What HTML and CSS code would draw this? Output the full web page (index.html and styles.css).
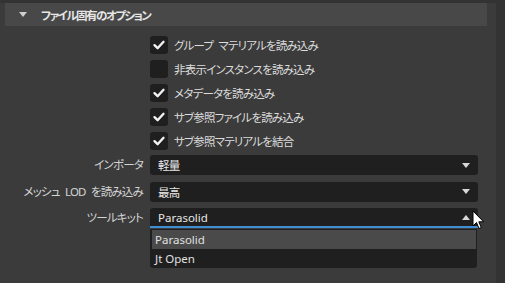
FILE: index.html
```html
<!DOCTYPE html>
<html lang="ja">
<head>
<meta charset="utf-8">
<link rel="stylesheet" href="styles.css">
</head>
<body>
<div class="page">
  <div class="main">
    <div class="header">
      <span class="tri"></span>
      <span class="title">ファイル固有のオプション</span>
    </div>
    <div class="checks">
      <div class="check"><span class="box on"><svg viewBox="0 0 18 18" width="18" height="18"><path d="M4.5 9.2 L7.6 12.2 L13.5 5.8" fill="none" stroke="#f2f2f2" stroke-width="2.4" stroke-linecap="round" stroke-linejoin="round"/></svg></span><span class="lbl">グループ マテリアルを読み込み</span></div>
      <div class="check"><span class="box"></span><span class="lbl">非表示インスタンスを読み込み</span></div>
      <div class="check"><span class="box on"><svg viewBox="0 0 18 18" width="18" height="18"><path d="M4.5 9.2 L7.6 12.2 L13.5 5.8" fill="none" stroke="#f2f2f2" stroke-width="2.4" stroke-linecap="round" stroke-linejoin="round"/></svg></span><span class="lbl">メタデータを読み込み</span></div>
      <div class="check"><span class="box on"><svg viewBox="0 0 18 18" width="18" height="18"><path d="M4.5 9.2 L7.6 12.2 L13.5 5.8" fill="none" stroke="#f2f2f2" stroke-width="2.4" stroke-linecap="round" stroke-linejoin="round"/></svg></span><span class="lbl">サブ参照ファイルを読み込み</span></div>
      <div class="check"><span class="box on"><svg viewBox="0 0 18 18" width="18" height="18"><path d="M4.5 9.2 L7.6 12.2 L13.5 5.8" fill="none" stroke="#f2f2f2" stroke-width="2.4" stroke-linecap="round" stroke-linejoin="round"/></svg></span><span class="lbl">サブ参照マテリアルを結合</span></div>
    </div>
    <div class="fields">
      <div class="flabel">インポータ</div>
      <div class="select"><span class="val">軽量</span><span class="arrow down"></span></div>
      <div class="flabel">メッシュ LOD を読み込み</div>
      <div class="select"><span class="val">最高</span><span class="arrow down"></span></div>
      <div class="flabel">ツールキット</div>
      <div class="select open"><span class="val latin">Parasolid</span><span class="arrow up"></span>
        <div class="popup">
          <div class="item hl">Parasolid</div>
          <div class="item">Jt Open</div>
        </div>
        <svg class="cursor" width="13" height="20" viewBox="0 0 13 20"><path d="M1 1 L1 16 L4.5 12.5 L7 18.5 L9.3 17.5 L6.8 11.8 L11.6 11.8 Z" fill="#ffffff" stroke="#000000" stroke-width="1" stroke-linejoin="miter"/></svg>
      </div>
    </div>
  </div>
  <div class="rail"></div>
</div>
</body>
</html>
```

FILE: styles.css
```css
* { box-sizing: border-box; }
html, body {
  margin: 0;
  padding: 0;
  width: 505px;
  height: 283px;
  overflow: hidden;
  background: #3b3b3b;
  font-family: "Noto Sans", "Noto Sans CJK JP", sans-serif;
  font-size: 11.5px;
  color: #dcdcdc;
}
.page {
  display: flex;
  height: 283px;
}
.main {
  width: 496px;
  padding-top: 3px;
  background: linear-gradient(#333333 0 3px, #3b3b3b 3px);
}
.rail {
  width: 9px;
  background: #333333;
}
.header {
  margin-left: 5px;
  width: 482px;
  height: 23px;
  background: #484848;
  display: flex;
  align-items: center;
  padding-left: 14px;
}
.tri {
  width: 0;
  height: 0;
  border-left: 4px solid transparent;
  border-right: 4px solid transparent;
  border-top: 5px solid #cfcfcf;
  margin-right: 14px;
}
.title {
  color: #e6e6e6;
  font-weight: 600;
  font-feature-settings: "palt";
  letter-spacing: -1.5px;
}
.checks {
  display: flex;
  flex-direction: column;
  gap: 6px;
  padding-left: 150px;
  margin-top: 10px;
}
.check {
  display: flex;
  align-items: center;
  height: 18px;
}
.box {
  width: 18px;
  height: 18px;
  background: #1f1f1f;
  border-radius: 3px;
  margin-right: 6px;
  display: block;
}
.box svg { display: block; }
.lbl, .flabel, .val {
  font-feature-settings: "palt";
  letter-spacing: -0.8px;
  word-spacing: 3px;
}
.lbl { color: #dcdcdc; }
.fields {
  display: grid;
  grid-template-columns: 150px 328px;
  grid-auto-rows: 20px;
  row-gap: 6.5px;
  margin-top: 5px;
}
.flabel {
  text-align: right;
  padding-right: 7px;
  line-height: 20px;
  color: #d4d4d4;
}
.select {
  position: relative;
  background: #1f1f1f;
  border-radius: 3px;
  display: flex;
  align-items: center;
  padding-left: 8px;
  padding-right: 8px;
}
.select.open {
  border-radius: 3px 3px 0 0;
  border-bottom: 2px solid #3d8fd1;
}
.val {
  flex: 1;
  color: #e8e8e8;
}
.val.latin { letter-spacing: 0; }
.arrow {
  width: 0;
  height: 0;
  border-left: 4px solid transparent;
  border-right: 4px solid transparent;
}
.arrow.down { border-top: 5px solid #d8d8d8; }
.arrow.up { border-bottom: 5px solid #d8d8d8; }
.popup {
  position: absolute;
  left: 0;
  top: 21px;
  width: 327px;
  background: #1f1f1f;
  border-radius: 0 0 3px 3px;
  padding: 1px 1px 0 2px;
}
.item {
  height: 19px;
  line-height: 19px;
  padding-left: 3px;
  color: #e0e0e0;
}
.item.hl {
  background: #4a4a4a;
}
.cursor {
  position: absolute;
  left: 322px;
  top: 2px;
}
```
